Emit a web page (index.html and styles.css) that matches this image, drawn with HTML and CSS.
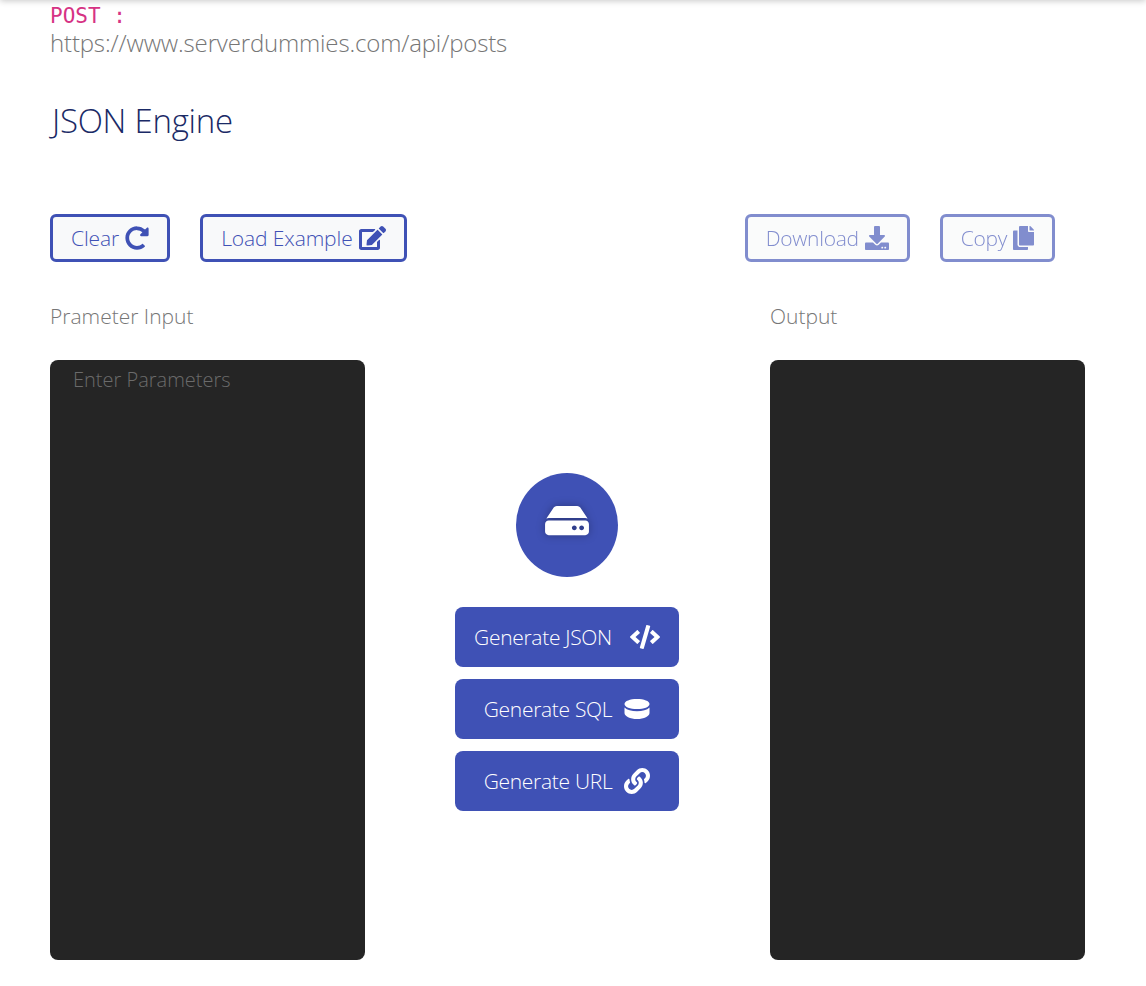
FILE: index.html
```html
<!DOCTYPE html>
<html lang="en">
<head>
<meta charset="utf-8">
<title>JSON Engine</title>
<link rel="stylesheet" href="styles.css">
</head>
<body>
<header class="topbar"></header>
<main class="page">
  <section class="endpoint">
    <code class="method">POST :</code>
    <p class="url">https://www.serverdummies.com/api/posts</p>
  </section>
  <h1 class="title">JSON Engine</h1>
  <div class="toolbar">
    <div class="group">
      <button class="btn">Clear <svg class="ico" viewBox="0 0 512 512"><path d="M256.455 8c66.269.119 126.437 26.233 170.859 68.685l35.715-35.715C478.149 25.851 504 36.559 504 57.941V192c0 13.255-10.745 24-24 24H345.941c-21.382 0-32.09-25.851-16.971-40.971l41.75-41.75c-30.864-28.899-70.801-44.907-113.23-45.273-92.398-.798-170.283 73.977-169.484 169.442C88.764 348.009 162.184 424 256 424c41.127 0 79.997-14.678 110.629-41.556 4.743-4.161 11.906-3.908 16.368.553l39.662 39.662c4.872 4.872 4.631 12.815-.482 17.433C378.202 479.813 319.926 504 256 504 119.034 504 8.001 392.967 8 256.002 7.999 119.193 119.646 7.755 256.455 8z"/></svg></button>
      <button class="btn">Load Example <svg class="ico" viewBox="0 0 576 512"><path d="M402.6 83.2l90.2 90.2c3.8 3.8 3.8 10 0 13.8L274.4 405.6l-92.8 10.3c-12.4 1.4-22.9-9.1-21.5-21.5l10.3-92.8L388.8 83.2c3.8-3.8 10-3.8 13.8 0zm162-22.9l-48.8-48.8c-15.2-15.2-39.9-15.2-55.2 0l-35.4 35.4c-3.8 3.8-3.8 10 0 13.8l90.2 90.2c3.8 3.8 10 3.8 13.8 0l35.4-35.4c15.2-15.3 15.2-40 0-55.2zM384 346.2V448H64V128h229.8c3.2 0 6.2-1.3 8.5-3.5l40-40c7.6-7.6 2.2-20.5-8.5-20.5H48C21.5 64 0 85.5 0 112v352c0 26.5 21.5 48 48 48h352c26.5 0 48-21.5 48-48V306.2c0-10.7-12.9-16-20.5-8.5l-40 40c-2.2 2.3-3.5 5.3-3.5 8.5z"/></svg></button>
    </div>
    <div class="group">
      <button class="btn dim">Download <svg class="ico" viewBox="0 0 512 512"><path d="M216 0h80c13.3 0 24 10.7 24 24v168h87.7c17.8 0 26.7 21.5 14.1 34.1L269.7 378.3c-7.5 7.5-19.8 7.5-27.3 0L90.1 226.1c-12.6-12.6-3.7-34.1 14.1-34.1H192V24c0-13.3 10.7-24 24-24zm296 376v112c0 13.3-10.7 24-24 24H24c-13.3 0-24-10.7-24-24V376c0-13.3 10.7-24 24-24h146.7l49 49c20.1 20.1 52.5 20.1 72.6 0l49-49H488c13.3 0 24 10.7 24 24zm-124 88c0-11-9-20-20-20s-20 9-20 20 9 20 20 20 20-9 20-20zm64 0c0-11-9-20-20-20s-20 9-20 20 9 20 20 20 20-9 20-20z"/></svg></button>
      <button class="btn dim">Copy <svg class="ico" viewBox="0 0 448 512"><path d="M320 448v40c0 13.255-10.745 24-24 24H24c-13.255 0-24-10.745-24-24V120c0-13.255 10.745-24 24-24h72v296c0 30.879 25.121 56 56 56h168zm0-344V0H152c-13.255 0-24 10.745-24 24v368c0 13.255 10.745 24 24 24h272c13.255 0 24-10.745 24-24V128H344c-13.2 0-24-10.8-24-24zm120.971-31.029L375.029 7.029A24 24 0 0 0 358.059 0H352v96h96v-6.059a24 24 0 0 0-7.029-16.97z"/></svg></button>
    </div>
  </div>
  <div class="workspace">
    <div class="pane">
      <label class="label" for="input">Prameter Input</label>
      <textarea class="editor" id="input" placeholder="Enter Parameters"></textarea>
    </div>
    <div class="actions">
      <div class="badge"><svg class="badge-ico" viewBox="0 0 576 512"><path d="M576 304v96c0 26.51-21.49 48-48 48H48c-26.51 0-48-21.49-48-48v-96c0-26.51 21.49-48 48-48h480c26.51 0 48 21.49 48 48zm-48-80a79.557 79.557 0 0 1 30.777 6.165L462.25 85.374A48.003 48.003 0 0 0 422.311 64H153.689a48 48 0 0 0-39.938 21.374L17.223 230.165A79.557 79.557 0 0 1 48 224h480zm-48 96c-17.673 0-32 14.327-32 32s14.327 32 32 32 32-14.327 32-32-14.327-32-32-32zm-96 0c-17.673 0-32 14.327-32 32s14.327 32 32 32 32-14.327 32-32-14.327-32-32-32z"/></svg></div>
      <button class="gen">Generate JSON <svg class="gen-ico wide" viewBox="0 0 640 512"><path d="M278.9 511.5l-61-17.7c-6.4-1.8-10-8.5-8.2-14.9L346.2 8.7c1.8-6.4 8.5-10 14.9-8.2l61 17.7c6.4 1.8 10 8.5 8.2 14.9L293.8 503.3c-1.9 6.4-8.5 10.1-14.9 8.2zm-114-112.2l43.5-46.4c4.6-4.9 4.3-12.7-.8-17.2L117 256l90.6-79.7c5.1-4.5 5.5-12.3.8-17.2l-43.5-46.4c-4.5-4.8-12.1-5.1-17-.5L3.8 247.2c-5.1 4.7-5.1 12.8 0 17.5l144.1 135.1c4.9 4.6 12.5 4.4 17-.5zm327.2.6l144.1-135.1c5.1-4.7 5.1-12.8 0-17.5L492.1 112.1c-4.8-4.5-12.4-4.3-17 .5L431.6 159c-4.6 4.9-4.3 12.7.8 17.2L523 256l-90.6 79.7c-5.1 4.5-5.5 12.3-.8 17.2l43.5 46.4c4.5 4.9 12.1 5.1 17 .6z"/></svg></button>
      <button class="gen">Generate SQL <svg class="gen-ico" viewBox="0 0 26 20"><path d="M13 0C6 0 .5 2 .5 5S6 10 13 10s12.500-2 12.500-5S20 0 13 0zM.5 8.500V14c0 3.300 5.500 6 12.500 6s12.500-2.700 12.500-6V8.500C23 11 18.500 12.300 13 12.300S3 11 .5 8.500z"/></svg></button>
      <button class="gen">Generate URL <svg class="gen-ico" viewBox="0 0 512 512"><path d="M326.612 185.391c59.747 59.809 58.927 155.698.36 214.59-.11.12-.24.25-.36.37l-67.2 67.2c-59.27 59.27-155.699 59.262-214.96 0-59.27-59.26-59.27-155.7 0-214.96l37.106-37.106c9.84-9.84 26.786-3.3 27.294 10.606.648 17.722 3.826 35.527 9.69 52.721 1.986 5.822.567 12.262-3.783 16.612l-13.087 13.087c-28.026 28.026-28.905 73.66-1.155 101.96 28.024 28.579 74.086 28.749 102.325.51l67.2-67.19c28.191-28.191 28.073-73.757 0-101.83-3.701-3.694-7.429-6.564-10.341-8.569a16.037 16.037 0 0 1-6.947-12.606c-.396-10.567 3.348-21.456 11.698-29.806l21.054-21.055c5.521-5.521 14.182-6.199 20.584-1.731a152.482 152.482 0 0 1 20.522 17.197zM467.547 44.449c-59.261-59.262-155.69-59.27-214.96 0l-67.2 67.2c-.12.12-.25.25-.36.37-58.566 58.892-59.387 154.781.36 214.59a152.454 152.454 0 0 0 20.521 17.196c6.402 4.468 15.064 3.789 20.584-1.731l21.054-21.055c8.35-8.35 12.094-19.239 11.698-29.806a16.037 16.037 0 0 0-6.947-12.606c-2.912-2.005-6.64-4.875-10.341-8.569-28.073-28.073-28.191-73.639 0-101.83l67.2-67.19c28.239-28.239 74.3-28.069 102.325.51 27.75 28.3 26.872 73.934-1.155 101.96l-13.087 13.087c-4.35 4.35-5.769 10.79-3.783 16.612 5.864 17.194 9.042 34.999 9.69 52.721.509 13.906 17.454 20.446 27.294 10.606l37.106-37.106c59.271-59.259 59.271-155.699.001-214.959z"/></svg></button>
    </div>
    <div class="pane">
      <label class="label" for="output">Output</label>
      <textarea class="editor" id="output"></textarea>
    </div>
  </div>
</main>
</body>
</html>
```
FILE: styles.css
```css
* { box-sizing: border-box; }
html, body { margin: 0; background: #fff; }
body {
  height: 986px;
  overflow: hidden;
  font-family: "Open Sans", "Noto Sans", sans-serif;
  font-weight: 300;
  position: relative;
}
.topbar {
  position: absolute;
  top: -10px; left: 0; right: 0;
  height: 10px;
  box-shadow: 0 1px 6px rgba(0,0,0,.22);
}
.page { padding: 4px 61px 0 50px; }
.endpoint { height: 52px; }
.method {
  display: block;
  font-family: "DejaVu Sans Mono", monospace;
  font-size: 21px;
  line-height: 24px;
  color: #d63384;
  font-weight: 400;
}
.url {
  margin: 0;
  font-size: 24px;
  line-height: 30px;
  letter-spacing: -.16px;
  color: #767676;
}
.title {
  margin: 43px 0 0 2px;
  font-size: 33px;
  line-height: 44px;
  letter-spacing: -.25px;
  font-weight: 300;
  color: #1a2a66;
}
.toolbar {
  display: flex;
  justify-content: space-between;
  margin-top: 71px;
  padding-right: 30px;
}
.group { display: flex; gap: 30px; }
.btn {
  display: inline-flex;
  align-items: center;
  gap: 6px;
  height: 48px;
  padding: 0 18px;
  border: 3px solid #3f51b5;
  border-radius: 6px;
  background: #f8f9fa;
  color: #3f51b5;
  font: inherit;
  font-size: 21px;
  letter-spacing: -.1px;
}
.btn.dim { opacity: .65; letter-spacing: -.3px; }
.ico { height: 24px; width: auto; fill: currentColor; }
.workspace {
  display: grid;
  grid-template-columns: 315px 1fr 315px;
  margin-top: 38px;
}
.pane { display: flex; flex-direction: column; }
.label {
  font-size: 21px;
  line-height: 32px;
  color: #767676;
  margin-bottom: 28px;
}
.editor {
  display: block;
  height: 600px;
  width: 315px;
  border: 0;
  border-radius: 8px;
  background: #252525;
  padding: 5px 23px;
  resize: none;
  color: #ccc;
  font: inherit;
  font-size: 20px;
  line-height: 30px;
  outline: none;
}
.editor::placeholder { color: #6b6b6b; opacity: 1; }
.actions {
  display: flex;
  flex-direction: column;
  align-items: center;
  gap: 12px;
  padding: 173px 1px 0 0;
}
.badge {
  width: 102px;
  height: 104px;
  margin-bottom: 18px;
  padding-bottom: 9px;
  border-radius: 50%;
  background: #3f51b5;
  display: flex;
  align-items: center;
  justify-content: center;
}
.badge-ico {
  width: 44px;
  height: 39px;
  fill: #fff;
  filter: drop-shadow(0 0 4px rgba(0,0,0,.3));
}
.gen {
  width: 224px;
  height: 60px;
  display: flex;
  align-items: center;
  justify-content: center;
  gap: 12px;
  border: 0;
  border-radius: 8px;
  background: #3f51b5;
  color: #fff;
  font: inherit;
  font-size: 21px;
  letter-spacing: -.3px;
}
.gen-ico { height: 26px; width: 26px; fill: #fff; }
.gen-ico.wide { width: 30px; margin-left: 6px; }
```
